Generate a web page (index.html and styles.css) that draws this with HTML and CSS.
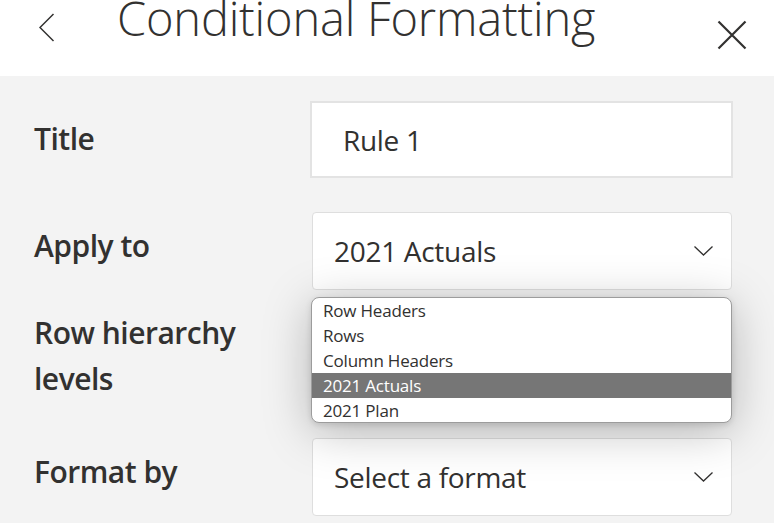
FILE: index.html
```html
<!DOCTYPE html>
<html lang="en">
<head>
<meta charset="utf-8">
<title>Conditional Formatting</title>
<link rel="stylesheet" href="styles.css">
</head>
<body>
<div class="panel">
  <header class="header">
    <button class="icon-btn back" aria-label="Back">
      <svg width="16" height="30" viewBox="0 0 16 30"><polyline points="14.5,1 1,14.5 14.5,28" fill="none" stroke="#323130" stroke-width="1.5"/></svg>
    </button>
    <h1 class="title">Conditional Formatting</h1>
    <button class="icon-btn close" aria-label="Close">
      <svg width="30" height="30" viewBox="0 0 30 30"><path d="M1.5 1.5 L28.5 28.5 M28.5 1.5 L1.5 28.5" fill="none" stroke="#323130" stroke-width="2.2"/></svg>
    </button>
  </header>
  <main class="form">
    <div class="row row-title">
      <label class="label">Title</label>
      <div class="field input"><span class="value value-input">Rule 1</span></div>
    </div>
    <div class="row">
      <label class="label">Apply to</label>
      <div class="field select">
        <span class="value">2021 Actuals</span>
        <svg class="chev" width="19" height="10" viewBox="0 0 19 10"><polyline points="0.5,0.5 9.5,9 18.5,0.5" fill="none" stroke="#323130" stroke-width="1.3"/></svg>
      </div>
    </div>
    <div class="row">
      <label class="label label-multi">Row hierarchy<br>levels</label>
      <div class="field select">
        <span class="value"></span>
      </div>
    </div>
    <div class="row">
      <label class="label">Format by</label>
      <div class="field select">
        <span class="value">Select a format</span>
        <svg class="chev" width="19" height="10" viewBox="0 0 19 10"><polyline points="0.5,0.5 9.5,9 18.5,0.5" fill="none" stroke="#323130" stroke-width="1.3"/></svg>
      </div>
    </div>
    <ul class="listbox" role="listbox">
      <li class="option">Row Headers</li>
      <li class="option">Rows</li>
      <li class="option">Column Headers</li>
      <li class="option selected">2021 Actuals</li>
      <li class="option">2021 Plan</li>
    </ul>
  </main>
</div>
</body>
</html>
```
FILE: styles.css
```css
html, body {
  margin: 0;
  padding: 0;
  width: 774px;
  height: 523px;
  overflow: hidden;
  background: #f3f3f3;
  font-family: "Open Sans", "Noto Sans", sans-serif;
  color: #323130;
}

.panel {
  width: 774px;
  height: 523px;
  display: flex;
  flex-direction: column;
}

.header {
  height: 76px;
  background: #ffffff;
  display: flex;
  align-items: flex-start;
  flex-shrink: 0;
}

.icon-btn {
  border: 0;
  background: none;
  padding: 0;
  margin: 0;
  display: block;
  line-height: 0;
}

.back {
  margin-left: 39px;
  margin-top: 13px;
}

.title {
  margin: 0 0 0 62px;
  font-size: 47px;
  font-weight: 300;
  line-height: 36px;
  letter-spacing: -0.2px;
  white-space: nowrap;
}

.close {
  margin-left: auto;
  margin-right: 27px;
  margin-top: 20px;
}

.form {
  position: relative;
  flex: 1;
  padding: 25px 41px 0 34px;
  display: flex;
  flex-direction: column;
  gap: 35px;
}

.row {
  display: grid;
  grid-template-columns: 276px 1fr;
  grid-template-rows: 78px;
  align-items: center;
}

.row-title {
  grid-template-rows: 77px;
  margin-bottom: -1px;
}

.label {
  font-size: 30px;
  font-weight: 600;
  letter-spacing: -0.5px;
  line-height: 46px;
  margin-bottom: 10px;
  white-space: nowrap;
}

.row-title .label {
  margin-bottom: 2px;
}

.label-multi {
  align-self: start;
  margin: -15px 0 0 0;
}

.field {
  box-sizing: border-box;
  background: #ffffff;
  display: flex;
  align-items: center;
  height: 100%;
}

.input {
  border: 2px solid #e3e3e3;
  padding-left: 31px;
}

.select {
  margin-left: 2px;
  margin-right: 1px;
  border: 1px solid #dedede;
  border-radius: 4px;
  padding: 0 18px 0 21px;
}

.value {
  font-size: 28px;
  letter-spacing: -0.3px;
  line-height: 40px;
  margin-top: 0;
  flex: 1;
  white-space: nowrap;
}

.chev {
  display: block;
  flex-shrink: 0;
}

.listbox {
  position: absolute;
  left: 311px;
  top: 221px;
  width: 421px;
  height: 126px;
  box-sizing: border-box;
  margin: 0;
  padding: 0;
  list-style: none;
  background: #ffffff;
  border: 1.5px solid #9c9c9c;
  border-radius: 8px;
  overflow: hidden;
  box-shadow: 0 8px 48px rgba(0, 0, 0, 0.26), 0 2px 6px rgba(0, 0, 0, 0.12);
}

.option {
  height: 25px;
  line-height: 25px;
  padding-left: 11px;
  font-size: 17px;
  letter-spacing: -0.2px;
  color: #323130;
  white-space: nowrap;
}

.option.selected {
  background: #767676;
  color: #ffffff;
}
```
